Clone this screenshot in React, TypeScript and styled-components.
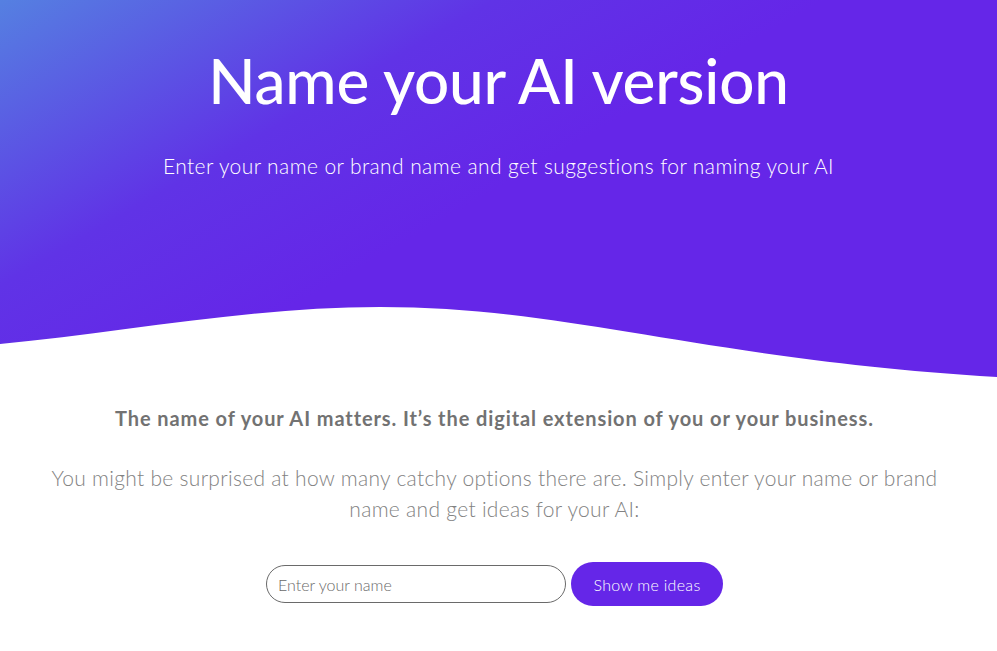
import styled, { createGlobalStyle } from "styled-components";

const GlobalStyle = createGlobalStyle`
  html, body {
    margin: 0;
    padding: 0;
    background: #ffffff;
    font-family: "Lato", "Noto Sans", sans-serif;
  }
  * { box-sizing: border-box; }
`;

const Hero = styled.section`
  display: flex;
  flex-direction: column;
  align-items: center;
  background: linear-gradient(150deg, #5580e1 0%, #6033e6 30%, #6526e8 50%, #6526e8 100%);
  color: #ffffff;
`;

const HeroTitle = styled.h1`
  margin: 43px 0 0;
  font-size: 62px;
  line-height: 74px;
  font-weight: 500;
  letter-spacing: -0.2px;
`;

const HeroSubtitle = styled.p`
  margin: 36px 0 0;
  font-size: 21px;
  line-height: 26px;
  font-weight: 300;
  letter-spacing: 0.4px;
`;

const Wave = styled.svg`
  display: block;
  width: 100%;
  height: 70px;
  margin-top: 128px;
`;

const Content = styled.main`
  display: flex;
  flex-direction: column;
  align-items: center;
  padding: 27px 48px 40px 40px;
  text-align: center;
`;

const Lead = styled.p`
  margin: 0;
  font-size: 20px;
  line-height: 28px;
  font-weight: 700;
  letter-spacing: 0.9px;
  color: #727272;
`;

const Body = styled.p`
  margin: 30px 0 0;
  max-width: 900px;
  font-size: 21px;
  line-height: 31px;
  font-weight: 300;
  letter-spacing: 0.3px;
  color: #828282;
`;

const Form = styled.form`
  display: flex;
  align-items: center;
  gap: 5px;
  margin: 38px 0 0;
`;

const NameInput = styled.input`
  width: 300px;
  height: 38px;
  padding: 0 11px;
  border: 1px solid #6a6a6a;
  border-radius: 19px;
  font-family: inherit;
  font-size: 16px;
  font-weight: 300;
  color: #444;
  outline: none;
  &::placeholder { color: #6a6a6a; }
`;

const IdeasButton = styled.button`
  width: 152px;
  height: 44px;
  border: none;
  border-radius: 22px;
  background: #6526e8;
  color: #ffffff;
  font-family: inherit;
  font-size: 16px;
  font-weight: 300;
  letter-spacing: 0.3px;
  cursor: pointer;
`;

export default function App() {
  return (
    <>
      <GlobalStyle />
      <Hero>
        <HeroTitle>Name your AI version</HeroTitle>
        <HeroSubtitle>Enter your name or brand name and get suggestions for naming your AI</HeroSubtitle>
        <Wave viewBox="0 0 997 70" preserveAspectRatio="none">
          <path d="M0,37 C120,26 250,0 380,0 C570,0 700,52 997,70 L997,70 L0,70 Z" fill="#ffffff" />
        </Wave>
      </Hero>
      <Content>
        <Lead>The name of your AI matters. It’s the digital extension of you or your business.</Lead>
        <Body>
          You might be surprised at how many catchy options there are. Simply enter your name or brand name and get
          ideas for your AI:
        </Body>
        <Form onSubmit={(e) => e.preventDefault()}>
          <NameInput placeholder="Enter your name" />
          <IdeasButton type="submit">Show me ideas</IdeasButton>
        </Form>
      </Content>
    </>
  );
}
